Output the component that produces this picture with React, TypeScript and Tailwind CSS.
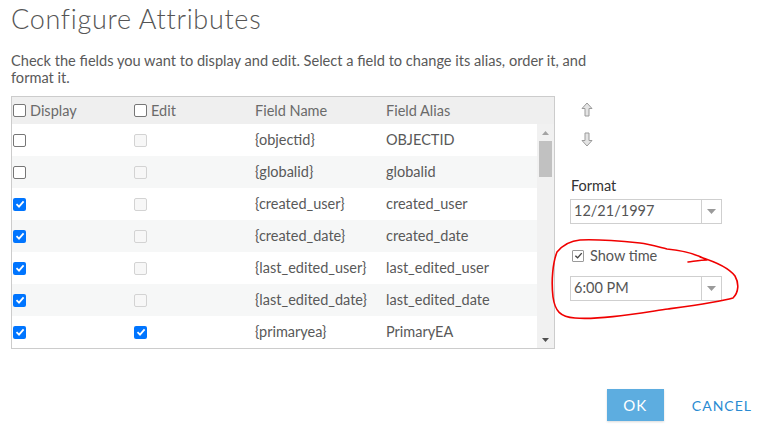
import React from 'react';

type Row = {
  name: string;
  alias: string;
  display: boolean;
  edit: boolean;
  editable: boolean;
};

const rows: Row[] = [
  { name: '{objectid}', alias: 'OBJECTID', display: false, edit: false, editable: false },
  { name: '{globalid}', alias: 'globalid', display: false, edit: false, editable: false },
  { name: '{created_user}', alias: 'created_user', display: true, edit: false, editable: false },
  { name: '{created_date}', alias: 'created_date', display: true, edit: false, editable: false },
  { name: '{last_edited_user}', alias: 'last_edited_user', display: true, edit: false, editable: false },
  { name: '{last_edited_date}', alias: 'last_edited_date', display: true, edit: false, editable: false },
  { name: '{primaryea}', alias: 'PrimaryEA', display: true, edit: true, editable: true },
];

// browser-style checkbox: checked (blue), empty, or disabled
const Check = ({ checked, disabled }: { checked?: boolean; disabled?: boolean }) => {
  if (checked) {
    return (
      <span className="flex h-[13px] w-[13px] shrink-0 items-center justify-center rounded-[2px] bg-[#0075ff]">
        <svg width="10" height="10" viewBox="0 0 10 10">
          <path d="M1.5 5.2 L4 7.6 L8.6 2.4" fill="none" stroke="#fff" strokeWidth="1.8" />
        </svg>
      </span>
    );
  }
  return (
    <span
      className={
        disabled
          ? 'block h-[13px] w-[13px] shrink-0 rounded-[2px] border border-[#d3d3d3] bg-[#f7f7f7]'
          : 'block h-[13px] w-[13px] shrink-0 rounded-[2px] border border-[#767676] bg-white'
      }
    />
  );
};

const Caret = () => (
  <svg width="9" height="5" viewBox="0 0 9 5">
    <path d="M0 0 H9 L4.5 5 Z" fill="#9a9a9a" />
  </svg>
);

const Select = ({ value }: { value: string }) => (
  <div className="flex h-[25px] w-[152px] items-stretch border border-[#cfcfcf] bg-white">
    <div className="flex flex-1 items-center pl-[3px] text-[14.5px] text-[#555]">{value}</div>
    <div className="flex w-[20px] items-center justify-center border-l border-[#cfcfcf]">
      <Caret />
    </div>
  </div>
);

const Arrow = ({ down }: { down?: boolean }) => (
  <svg width="12" height="15" viewBox="0 0 12 15" style={down ? { transform: 'rotate(180deg)' } : undefined}>
    <path d="M6 1 L11 6.5 H8 V14 H4 V6.5 H1 Z" fill="#e4e4e4" stroke="#9b9b9b" strokeWidth="1" strokeLinejoin="round" />
  </svg>
);

export default function App() {
  return (
    <div className="relative h-[437px] w-[764px] overflow-hidden bg-white font-['Lato','Open_Sans',sans-serif] text-[#555]">
      <div className="pl-[11px] pt-[3px]">
        <h1 className="text-[27px] font-light leading-[32px] tracking-[0.7px] text-[#555]">Configure Attributes</h1>
        <p className="mt-[17px] w-[600px] text-[14.6px] leading-[17px] text-[#595959]">
          Check the fields you want to display and edit. Select a field to change its alias, order it, and format it.
        </p>

        <div className="mt-[10px] flex">
          {/* field table */}
          <div className="w-[544px] border border-[#cccccc]">
            <div className="flex h-[27px] items-center bg-[#efefef] text-[14.5px] text-[#6a6a6a]">
              <div className="flex w-[122px] items-center gap-[4px] pl-[1px]">
                <Check />
                <span>Display</span>
              </div>
              <div className="flex w-[121px] items-center gap-[4px]">
                <Check />
                <span>Edit</span>
              </div>
              <div className="w-[131px]">Field Name</div>
              <div>Field Alias</div>
            </div>
            <div className="flex">
              <div className="flex-1">
                {rows.map((r, i) => (
                  <div
                    key={r.name}
                    className={`flex h-[32px] items-center text-[14.5px] text-[#595959] ${i % 2 ? 'bg-[#f6f7f7]' : 'bg-white'}`}
                  >
                    <div className="flex w-[122px] pl-[1px]">
                      <Check checked={r.display} />
                    </div>
                    <div className="flex w-[121px]">
                      <Check checked={r.edit} disabled={!r.editable} />
                    </div>
                    <div className="w-[131px]">{r.name}</div>
                    <div>{r.alias}</div>
                  </div>
                ))}
              </div>
              {/* scrollbar */}
              <div className="flex w-[17px] flex-col items-center bg-[#f1f1f1]">
                <div className="flex h-[17px] items-center justify-center">
                  <svg width="7" height="4" viewBox="0 0 7 4">
                    <path d="M0 4 H7 L3.5 0 Z" fill="#a3a3a3" />
                  </svg>
                </div>
                <div className="h-[36px] w-[13px] bg-[#c1c1c1]" />
                <div className="flex-1" />
                <div className="flex h-[17px] items-center justify-center">
                  <svg width="7" height="4" viewBox="0 0 7 4">
                    <path d="M0 0 H7 L3.5 4 Z" fill="#505050" />
                  </svg>
                </div>
              </div>
            </div>
          </div>

          {/* ordering + format panel */}
          <div className="flex flex-col pl-[15px]">
            <div className="flex flex-col gap-[15px] pl-[11px] pt-[6px]">
              <Arrow />
              <Arrow down />
            </div>
            <div className="mt-[28px] pl-[1px] text-[14.5px] text-[#333]">Format</div>
            <div className="mt-[2px]">
              <Select value="12/21/1997" />
            </div>
            <div className="mt-[21px] flex items-center gap-[6px] pl-[2px] text-[14.5px] text-[#555]">
              <span className="flex h-[12px] w-[12px] items-center justify-center rounded-[1px] border border-[#9a9a9a] bg-white">
                <svg width="9" height="9" viewBox="0 0 10 10">
                  <path d="M1.5 5.2 L4 7.6 L8.6 2.4" fill="none" stroke="#444" strokeWidth="1.5" />
                </svg>
              </span>
              <span>Show time</span>
            </div>
            <div className="mt-[9px]">
              <Select value="6:00 PM" />
            </div>
          </div>
        </div>
      </div>

      <div className="mt-[40px] flex items-center justify-end gap-[28px] pr-[12px]">
        <button className="h-[32px] w-[57px] bg-[#5dade0] text-[15px] tracking-[1px] text-white shadow-[0_1px_2px_rgba(0,0,0,0.15)]">
          OK
        </button>
        <span className="text-[14px] tracking-[1px] text-[#2a8bd2]">CANCEL</span>
      </div>

      {/* hand-drawn red annotation around the time option */}
      <svg className="pointer-events-none absolute left-0 top-0" width="764" height="437" viewBox="0 0 764 437">
        <path
          d="M688 262 C696 261 702 260 707 260 C700 256 688 251 667 249 C655 246 648 244 640 243 C620 241 598 239 580 240 C568 241 562 246 557 252 C553 262 551 280 553 297 C555 311 560 317 575 318 C600 320 640 313 668 309 C690 306 720 302 733 298 C739 292 739 283 735 276 C729 268 716 262 700 257"
          fill="none"
          stroke="#f00000"
          strokeWidth="1.6"
          strokeLinecap="round"
          strokeLinejoin="round"
        />
      </svg>
    </div>
  );
}
